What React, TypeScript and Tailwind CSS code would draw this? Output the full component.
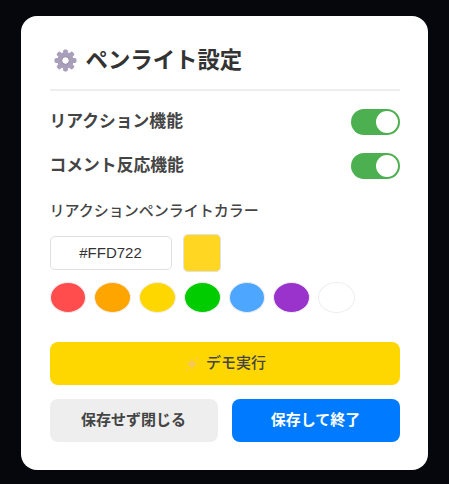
import React from 'react';

const FONT = '"Liberation Sans", "Noto Sans CJK JP", sans-serif';

function GearIcon() {
  const teeth = [0, 45, 90, 135, 180, 225, 270, 315];
  return (
    <svg width="23" height="23" viewBox="0 0 24 24" className="shrink-0">
      <circle cx="12" cy="12" r="8.500" fill="#a99fba" />
      {teeth.map((deg) => (
        <rect key={deg} x="9.500" y="0.500" width="5" height="6" rx="1.800" fill="#a99fba" transform={`rotate(${deg} 12 12)`} />
      ))}
      <circle cx="12" cy="12" r="4" fill="#fff" stroke="#8f86a3" strokeWidth="1" />
    </svg>
  );
}

function Sparkle() {
  return (
    <svg width="18" height="18" viewBox="0 0 18 18" className="shrink-0">
      <path fill="#f5c75c" d="M9 2.500c.7 4.300 2.200 5.800 6.500 6.500-4.300.7-5.800 2.200-6.500 6.500C8.300 11.200 6.800 9.700 2.500 9c4.300-.7 5.800-2.200 6.500-6.500z" />
      <path fill="#f5c75c" d="M14.500 1.500c.2 1.300.7 1.800 2 2-1.300.2-1.800.7-2 2-.2-1.300-.7-1.800-2-2 1.300-.2 1.800-.7 2-2z" />
      <path fill="#f5c75c" d="M3.800 12.500c.2 1.100.6 1.500 1.700 1.700-1.100.2-1.500.6-1.700 1.700-.2-1.100-.6-1.500-1.700-1.700 1.100-.2 1.500-.6 1.700-1.700z" />
    </svg>
  );
}

function Toggle() {
  return (
    <div className="flex h-[26px] w-[49px] items-center justify-end rounded-full bg-[#4caf50] pr-[2px]">
      <div className="h-[22px] w-[22px] rounded-full bg-white" />
    </div>
  );
}

function ToggleRow({ label }: { label: string }) {
  return (
    <div className="flex h-[26px] items-center justify-between">
      <span className="text-[16.800px] font-bold text-[#444]">{label}</span>
      <Toggle />
    </div>
  );
}

const swatches = ['bg-[#ff4d4d]', 'bg-[#ffa500]', 'bg-[#ffd700]', 'bg-[#00cc00]', 'bg-[#4da6ff]', 'bg-[#9933cc]', 'bg-white'];

export default function App() {
  return (
    <div className="h-[484px] w-[449px] overflow-hidden bg-[#05070c] pl-[21px] pt-4" style={{ fontFamily: FONT }}>
      <div className="h-[454px] w-[407px] rounded-[16px] bg-white px-[28.500px] pt-[28px]">
        {/* Header */}
        <div className="flex h-[47px] items-center gap-[9px] border-b-2 border-[#eee] pb-[12px] pl-[4px]">
          <GearIcon />
          <h2 className="text-[22.400px] leading-[30px] font-bold text-[#333]">ペンライト設定</h2>
        </div>

        <div className="mt-[18px] flex flex-col gap-[18px]">
          <ToggleRow label="リアクション機能" />
          <ToggleRow label="コメント反応機能" />
        </div>

        <div className="mt-[21px] text-[15px] leading-[21px] font-medium text-[#444]">リアクションペンライトカラー</div>

        {/* Color input */}
        <div className="mt-[13px] flex items-center gap-[11px]">
          <div className="flex h-[34px] w-[122px] items-center justify-center rounded-[5px] border-[1.500px] border-[#e0e0e0] text-[15px] text-[#333]">
            #FFD722
          </div>
          <div className="h-[38px] w-[38px] rounded-[5px] border-[1.500px] border-[#e2e2e2] bg-[#ffd722]" />
        </div>

        {/* Swatches */}
        <div className="mt-[10px] flex gap-[8px]">
          {swatches.map((c, i) => (
            <div key={i} className={`h-[31px] w-[36.800px] rounded-[50%] border-[1.500px] border-[#eee] ${c}`} />
          ))}
        </div>

        {/* Buttons */}
        <button className="mt-[29px] flex h-[43px] w-full items-center justify-center gap-[5px] rounded-[8px] bg-[#ffd700] text-[15px] font-medium text-[#444]">
          <Sparkle />
          デモ実行
        </button>

        <div className="mt-[14px] flex gap-[14px]">
          <button className="h-[43px] w-[168px] rounded-[8px] bg-[#eee] text-[15px] font-bold text-[#444]">保存せず閉じる</button>
          <button className="h-[43px] w-[168px] rounded-[8px] bg-[#007bff] text-[15px] font-bold text-white">保存して終了</button>
        </div>
      </div>
    </div>
  );
}
